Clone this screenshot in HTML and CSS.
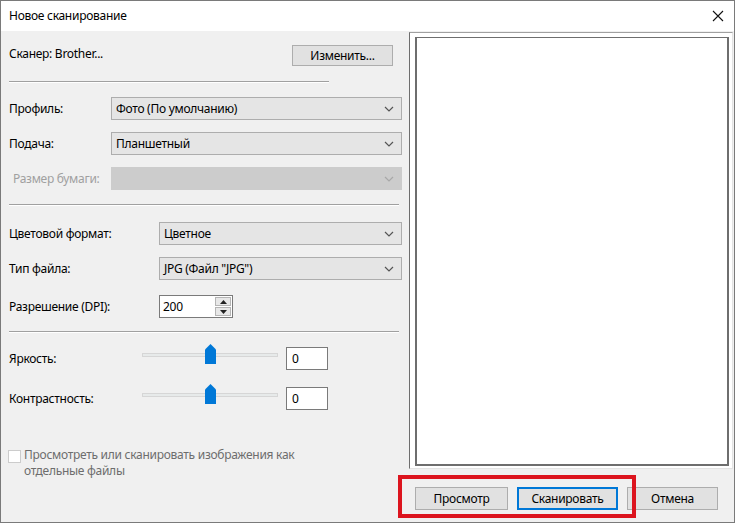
FILE: index.html
```html
<!DOCTYPE html>
<html lang="ru">
<head>
<meta charset="utf-8">
<title>Новое сканирование</title>
<link rel="stylesheet" href="styles.css">
</head>
<body>
<div class="window">
  <div class="titlebar">
    <span class="title">Новое сканирование</span>
    <svg class="close" width="12" height="12" viewBox="0 0 12 12"><path d="M1 1 L11 11 M11 1 L1 11" stroke="#111" stroke-width="1.1" fill="none"/></svg>
  </div>
  <div class="body">
    <div class="left">
      <div class="scanner-row">
        <span class="scanner">Сканер: Brother...</span>
        <button class="btn change">Изменить...</button>
      </div>
      <div class="sep short"></div>

      <div class="row r-first">
        <span class="label w1">Профиль:</span>
        <div class="select"><span>Фото (По умолчанию)</span><svg class="chev" width="10" height="6" viewBox="0 0 10 6"><path d="M1 1 L5 5 L9 1" stroke="#555" stroke-width="1.2" fill="none"/></svg></div>
      </div>
      <div class="row">
        <span class="label w1">Подача:</span>
        <div class="select"><span>Планшетный</span><svg class="chev" width="10" height="6" viewBox="0 0 10 6"><path d="M1 1 L5 5 L9 1" stroke="#555" stroke-width="1.2" fill="none"/></svg></div>
      </div>
      <div class="row">
        <span class="label w1 disabled indent">Размер бумаги:</span>
        <div class="select off"><span></span><svg class="chev" width="10" height="6" viewBox="0 0 10 6"><path d="M1 1 L5 5 L9 1" stroke="#a8a8a8" stroke-width="1.2" fill="none"/></svg></div>
      </div>
      <div class="sep long s2"></div>

      <div class="row r-first2">
        <span class="label w2">Цветовой формат:</span>
        <div class="select"><span>Цветное</span><svg class="chev" width="10" height="6" viewBox="0 0 10 6"><path d="M1 1 L5 5 L9 1" stroke="#555" stroke-width="1.2" fill="none"/></svg></div>
      </div>
      <div class="row">
        <span class="label w2">Тип файла:</span>
        <div class="select"><span>JPG (Файл "JPG")</span><svg class="chev" width="10" height="6" viewBox="0 0 10 6"><path d="M1 1 L5 5 L9 1" stroke="#555" stroke-width="1.2" fill="none"/></svg></div>
      </div>
      <div class="row r-dpi">
        <span class="label w2">Разрешение (DPI):</span>
        <div class="spin">
          <span class="spin-val">200</span>
          <div class="spin-btns">
            <span class="sb"><svg width="7" height="4" viewBox="0 0 7 4"><path d="M0 4 L3.5 0 L7 4 Z" fill="#222"/></svg></span>
            <span class="sb"><svg width="7" height="4" viewBox="0 0 7 4"><path d="M0 0 L3.5 4 L7 0 Z" fill="#222"/></svg></span>
          </div>
        </div>
      </div>
      <div class="sep long s3"></div>

      <div class="row r-slider1">
        <span class="label w3">Яркость:</span>
        <div class="slider">
          <div class="track"></div>
          <svg class="thumb" width="11" height="20" viewBox="0 0 11 20"><path d="M0 5.5 L5.5 0 L11 5.5 V20 H0 Z" fill="#0078d7"/></svg>
        </div>
        <div class="valbox">0</div>
      </div>
      <div class="row r-slider2">
        <span class="label w3">Контрастность:</span>
        <div class="slider">
          <div class="track"></div>
          <svg class="thumb" width="11" height="20" viewBox="0 0 11 20"><path d="M0 5.5 L5.5 0 L11 5.5 V20 H0 Z" fill="#0078d7"/></svg>
        </div>
        <div class="valbox">0</div>
      </div>

      <div class="check-row">
        <span class="checkbox"></span>
        <span class="check-text">Просмотреть или сканировать изображения как<br>отдельные файлы</span>
      </div>
    </div>

    <div class="right">
      <div class="preview"><div class="preview-inner"></div></div>
      <div class="actions">
        <button class="btn act b1">Просмотр</button>
        <button class="btn act b2 default">Сканировать</button>
        <button class="btn act b3">Отмена</button>
      </div>
    </div>
  </div>
  <div class="highlight"></div>
</div>
</body>
</html>
```

FILE: styles.css
```css
* { box-sizing: border-box; }

html, body {
  margin: 0;
  padding: 0;
  background: #ffffff;
}

body {
  font-family: "Noto Sans", "Open Sans", sans-serif;
  font-size: 12px;
  letter-spacing: -0.28px;
  color: #000;
}

.window {
  position: relative;
  width: 735px;
  height: 523px;
  border: 1px solid #7a7a7a;
  background: #f0f0f0;
  display: flex;
  flex-direction: column;
  overflow: hidden;
}

.titlebar {
  height: 30px;
  background: #ffffff;
  display: flex;
  align-items: center;
  justify-content: space-between;
  padding: 0 10px 0 8px;
  flex: none;
}

.title {
  font-size: 12px;
  line-height: 16px;
}

.close {
  display: block;
}

.body {
  flex: 1;
  display: flex;
  min-height: 0;
}

.left {
  width: 408px;
  flex: none;
  padding: 0 7px 0 8px;
  display: flex;
  flex-direction: column;
}

.scanner-row {
  margin-top: 14px;
  margin-right: 9px;
  height: 21px;
  display: flex;
  align-items: center;
  justify-content: space-between;
}

.scanner {
  margin-top: -5px;
}

.btn {
  font-family: "Noto Sans", "Open Sans", sans-serif;
  font-size: 12px;
  letter-spacing: -0.28px;
  color: #000;
  background: #e1e1e1;
  border: 1px solid #adadad;
  padding: 0;
  margin: 0;
  display: flex;
  align-items: center;
  justify-content: center;
}

.change {
  width: 101px;
  height: 21px;
}

.sep {
  height: 2px;
  border-top: 1px solid #a0a0a0;
  border-bottom: 1px solid #ffffff;
  flex: none;
}

.sep.short {
  width: 320px;
  margin-top: 15px;
}

.sep.long {
  width: 390px;
}

.s2 { margin-top: 14px; }
.s3 { margin-top: 13px; }

.row {
  display: flex;
  align-items: center;
  height: 23px;
  margin-top: 12px;
  flex: none;
}

.r-first { margin-top: 14px; }
.r-first2 { margin-top: 16px; }
.r-dpi { margin-top: 15px; }
.r-slider1 { margin-top: 14px; }
.r-slider2 { margin-top: 17px; }

.label {
  flex: none;
  white-space: nowrap;
}

.w1 { width: 102px; }
.w2 { width: 150px; }
.w3 { width: 133px; }

.label.disabled { color: #a0a0a0; }
.label.indent { padding-left: 4px; }

.select {
  flex: 1;
  height: 23px;
  background: #e5e5e5;
  border: 1px solid #adadad;
  display: flex;
  align-items: center;
  justify-content: space-between;
  padding: 0 7px 0 4px;
}

.select.off {
  background: #cccccc;
  border-color: #cccccc;
}

.chev { display: block; }

.spin {
  width: 74px;
  height: 23px;
  display: flex;
  align-items: stretch;
  background: #ffffff;
  border: 1px solid #7a7a7a;
}

.spin-val {
  flex: 1;
  padding-left: 3px;
  display: flex;
  align-items: center;
}

.spin-btns {
  width: 17px;
  display: flex;
  flex-direction: column;
  gap: 1px;
  padding: 1px 1px 1px 0;
  background: #ffffff;
}

.sb {
  flex: 1;
  background: #e8e8e8;
  border: 1px solid #b5b5b5;
  display: flex;
  align-items: center;
  justify-content: center;
}

.sb svg { display: block; }

.slider {
  position: relative;
  width: 136px;
  height: 23px;
  flex: none;
}

.track {
  position: absolute;
  left: 0;
  right: 0;
  top: 6px;
  height: 4px;
  background: #e7eaea;
  border: 1px solid #d6d6d6;
}

.thumb {
  position: absolute;
  left: 63px;
  top: -3px;
  display: block;
}

.valbox {
  margin-left: 8px;
  width: 42px;
  height: 23px;
  background: #ffffff;
  border: 1px solid #7a7a7a;
  display: flex;
  align-items: center;
  padding-left: 5px;
}

.check-row {
  margin-top: 37px;
  display: flex;
  align-items: flex-start;
  margin-left: -1px;
}

.checkbox {
  width: 13px;
  height: 13px;
  background: #ffffff;
  border: 1px solid #cccccc;
  flex: none;
  margin-top: 3px;
}

.check-text {
  margin-left: 3px;
  color: #6d6d6d;
  line-height: 16px;
}

.right {
  flex: 1;
  display: flex;
  flex-direction: column;
  padding-top: 1px;
}

.preview {
  width: 324px;
  height: 437px;
  background: #ffffff;
  border-left: 1px solid #6e6e6e;
  border-top: 1px solid #a0a0a0;
  border-right: 1px solid #e3e3e3;
  border-bottom: 1px solid #e3e3e3;
  padding: 4px 3px 2px 5px;
}

.preview-inner {
  width: 100%;
  height: 100%;
  border: 1px solid #6e6e6e;
  border-width: 1px 2px 2px 2px;
  background: #ffffff;
}

.actions {
  margin-top: 18px;
  display: flex;
  gap: 9px;
  padding-left: 6px;
}

.act { height: 23px; }
.b1 { width: 93px; }
.b2 { width: 101px; }
.b3 { width: 91px; }

.default {
  border: 2px solid #0078d7;
  background: #e1e1e1;
}

.highlight {
  position: absolute;
  left: 397px;
  top: 474px;
  width: 238px;
  height: 43px;
  border: 4px solid #dc141e;
  pointer-events: none;
}
```
